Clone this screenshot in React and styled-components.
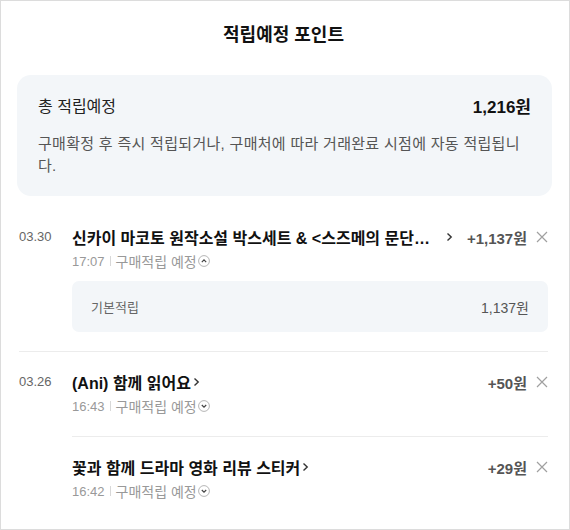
import React from 'react';
import styled, { createGlobalStyle } from 'styled-components';

const GlobalStyle = createGlobalStyle`
  body {
    margin: 0;
    background: #fff;
    font-family: "Liberation Sans", "Noto Sans CJK KR", sans-serif;
    color: #222;
  }
`;

const groups = [
  {
    date: '03.30',
    entries: [
      {
        title: '신카이 마코토 원작소설 박스세트 & <스즈메의 문단속> 한정판',
        amount: '+1,137원',
        time: '17:07',
        open: true,
        details: [{ label: '기본적립', amount: '1,137원' }],
      },
    ],
  },
  {
    date: '03.26',
    entries: [
      { title: '(Ani) 함께 읽어요', amount: '+50원', time: '16:43' },
      { title: '꽃과 함께 드라마 영화 리뷰 스티커', amount: '+29원', time: '16:42' },
    ],
  },
];

export default function App() {
  return (
    <>
      <GlobalStyle />
      <Panel>
        <Title>적립예정 포인트</Title>

        <Summary>
          <SummaryHead>
            <SummaryLabel>총 적립예정</SummaryLabel>
            <SummaryTotal>1,216원</SummaryTotal>
          </SummaryHead>
          <SummaryNote>
            구매확정 후 즉시 적립되거나, 구매처에 따라 거래완료 시점에 자동 적립됩니다.
          </SummaryNote>
        </Summary>

        <List>
          {groups.map(group => (
            <Group key={group.date}>
              <DateCol>{group.date}</DateCol>
              <Entries>
                {group.entries.map(entry => (
                  <Entry key={entry.time}>
                    <EntryRow>
                      <EntryTitle>
                        <EntryText>{entry.title}</EntryText>
                        <Chevron />
                      </EntryTitle>
                      <Amount>{entry.amount}</Amount>
                      <CloseButton aria-label="삭제">
                        <svg width="12" height="12" viewBox="0 0 12 12">
                          <path d="M1 1 L11 11 M11 1 L1 11" stroke="#a0a0a0" strokeWidth="1.2" fill="none" />
                        </svg>
                      </CloseButton>
                    </EntryRow>
                    <Meta>
                      <MetaTime>{entry.time}</MetaTime>
                      <MetaDivider />
                      구매적립 예정
                      <Toggle open={entry.open} />
                    </Meta>
                    {entry.open && entry.details.map(d => (
                      <Detail key={d.label}>
                        <DetailLabel>{d.label}</DetailLabel>
                        <DetailAmount>{d.amount}</DetailAmount>
                      </Detail>
                    ))}
                  </Entry>
                ))}
              </Entries>
            </Group>
          ))}
        </List>
      </Panel>
    </>
  );
}

const Chevron = () => (
  <ChevronIcon width="7" height="12" viewBox="0 0 7 12">
    <path d="M1.5 2.5 L5.2 6 L1.5 9.5" stroke="#333" strokeWidth="1.4" fill="none" />
  </ChevronIcon>
);

// circle with a small chevron, up when the row is expanded
const Toggle = ({ open }) => (
  <ToggleIcon width="12" height="12" viewBox="0 0 12 12">
    <circle cx="6" cy="6" r="5.4" stroke="#b5b5b5" strokeWidth="1" fill="#fff" />
    <path
      d={open ? 'M3.8 7.1 L6 4.9 L8.2 7.1' : 'M3.8 5 L6 7.2 L8.2 5'}
      stroke="#444"
      strokeWidth="1.2"
      fill="none"
    />
  </ToggleIcon>
);

const Panel = styled.div`
  box-sizing: border-box;
  width: 570px;
  height: 530px;
  border: 1px solid #dcdcdc;
  background: #fff;
  padding: 0 21px 0 18px;
  overflow: hidden;
`;

const Title = styled.h1`
  margin: 0;
  padding: 22px 0 28px;
  text-align: center;
  font-size: 18px;
  line-height: 24px;
  font-weight: 700;
  color: #111;
`;

const Summary = styled.section`
  margin: 0 -4px 0 -2px;
  padding: 18px 21px 19px;
  background: #f3f6f9;
  border-radius: 14px;
`;

const SummaryHead = styled.div`
  display: flex;
  align-items: center;
  justify-content: space-between;
  height: 24px;
`;

const SummaryLabel = styled.span`
  font-size: 16px;
  color: #222;
`;

const SummaryTotal = styled.strong`
  font-size: 17px;
  font-weight: 700;
  color: #111;
`;

const SummaryNote = styled.p`
  margin: 16px 0 0;
  font-size: 15px;
  line-height: 22px;
  letter-spacing: 0.3px;
  color: #555;
`;

const List = styled.div`
  margin-top: 11px;
`;

const Group = styled.div`
  display: flex;
  & + & {
    border-top: 1px solid #ececec;
  }
`;

const DateCol = styled.div`
  width: 53px;
  flex-shrink: 0;
  padding-top: 19px;
  font-size: 13px;
  line-height: 22px;
  color: #666;
`;

const Entries = styled.div`
  flex: 1;
  min-width: 0;
`;

const Entry = styled.div`
  padding: 19px 0;
  & + & {
    border-top: 1px solid #ececec;
  }
`;

const EntryRow = styled.div`
  display: flex;
  align-items: center;
  height: 22px;
`;

const EntryTitle = styled.div`
  display: flex;
  align-items: center;
  flex: 1;
  min-width: 0;
`;

const EntryText = styled.span`
  overflow: hidden;
  white-space: nowrap;
  text-overflow: ellipsis;
  font-size: 16px;
  font-weight: 700;
  color: #111;
`;

const ChevronIcon = styled.svg`
  flex-shrink: 0;
  margin-left: 2px;
`;

const Amount = styled.span`
  flex-shrink: 0;
  margin-left: 14px;
  font-size: 15px;
  font-weight: 700;
  color: #555;
`;

const CloseButton = styled.button`
  display: flex;
  flex-shrink: 0;
  margin-left: 9px;
  padding: 0;
  border: 0;
  background: none;
  cursor: pointer;
`;

const Meta = styled.div`
  display: flex;
  align-items: center;
  margin-top: 2px;
  height: 22px;
  font-size: 14px;
  color: #999;
`;

const MetaTime = styled.span`
  font-size: 13px;
`;

const MetaDivider = styled.span`
  display: inline-block;
  width: 1px;
  height: 10px;
  margin: 0 5px;
  background: #d8d8d8;
`;

const ToggleIcon = styled.svg`
  margin-left: 1px;
`;

const Detail = styled.div`
  display: flex;
  align-items: center;
  justify-content: space-between;
  height: 51px;
  margin-top: 9px;
  padding: 0 19px;
  background: #f3f6f9;
  border-radius: 7px;
`;

const DetailLabel = styled.span`
  font-size: 13px;
  color: #666;
`;

const DetailAmount = styled.span`
  font-size: 14px;
  color: #555;
`;
